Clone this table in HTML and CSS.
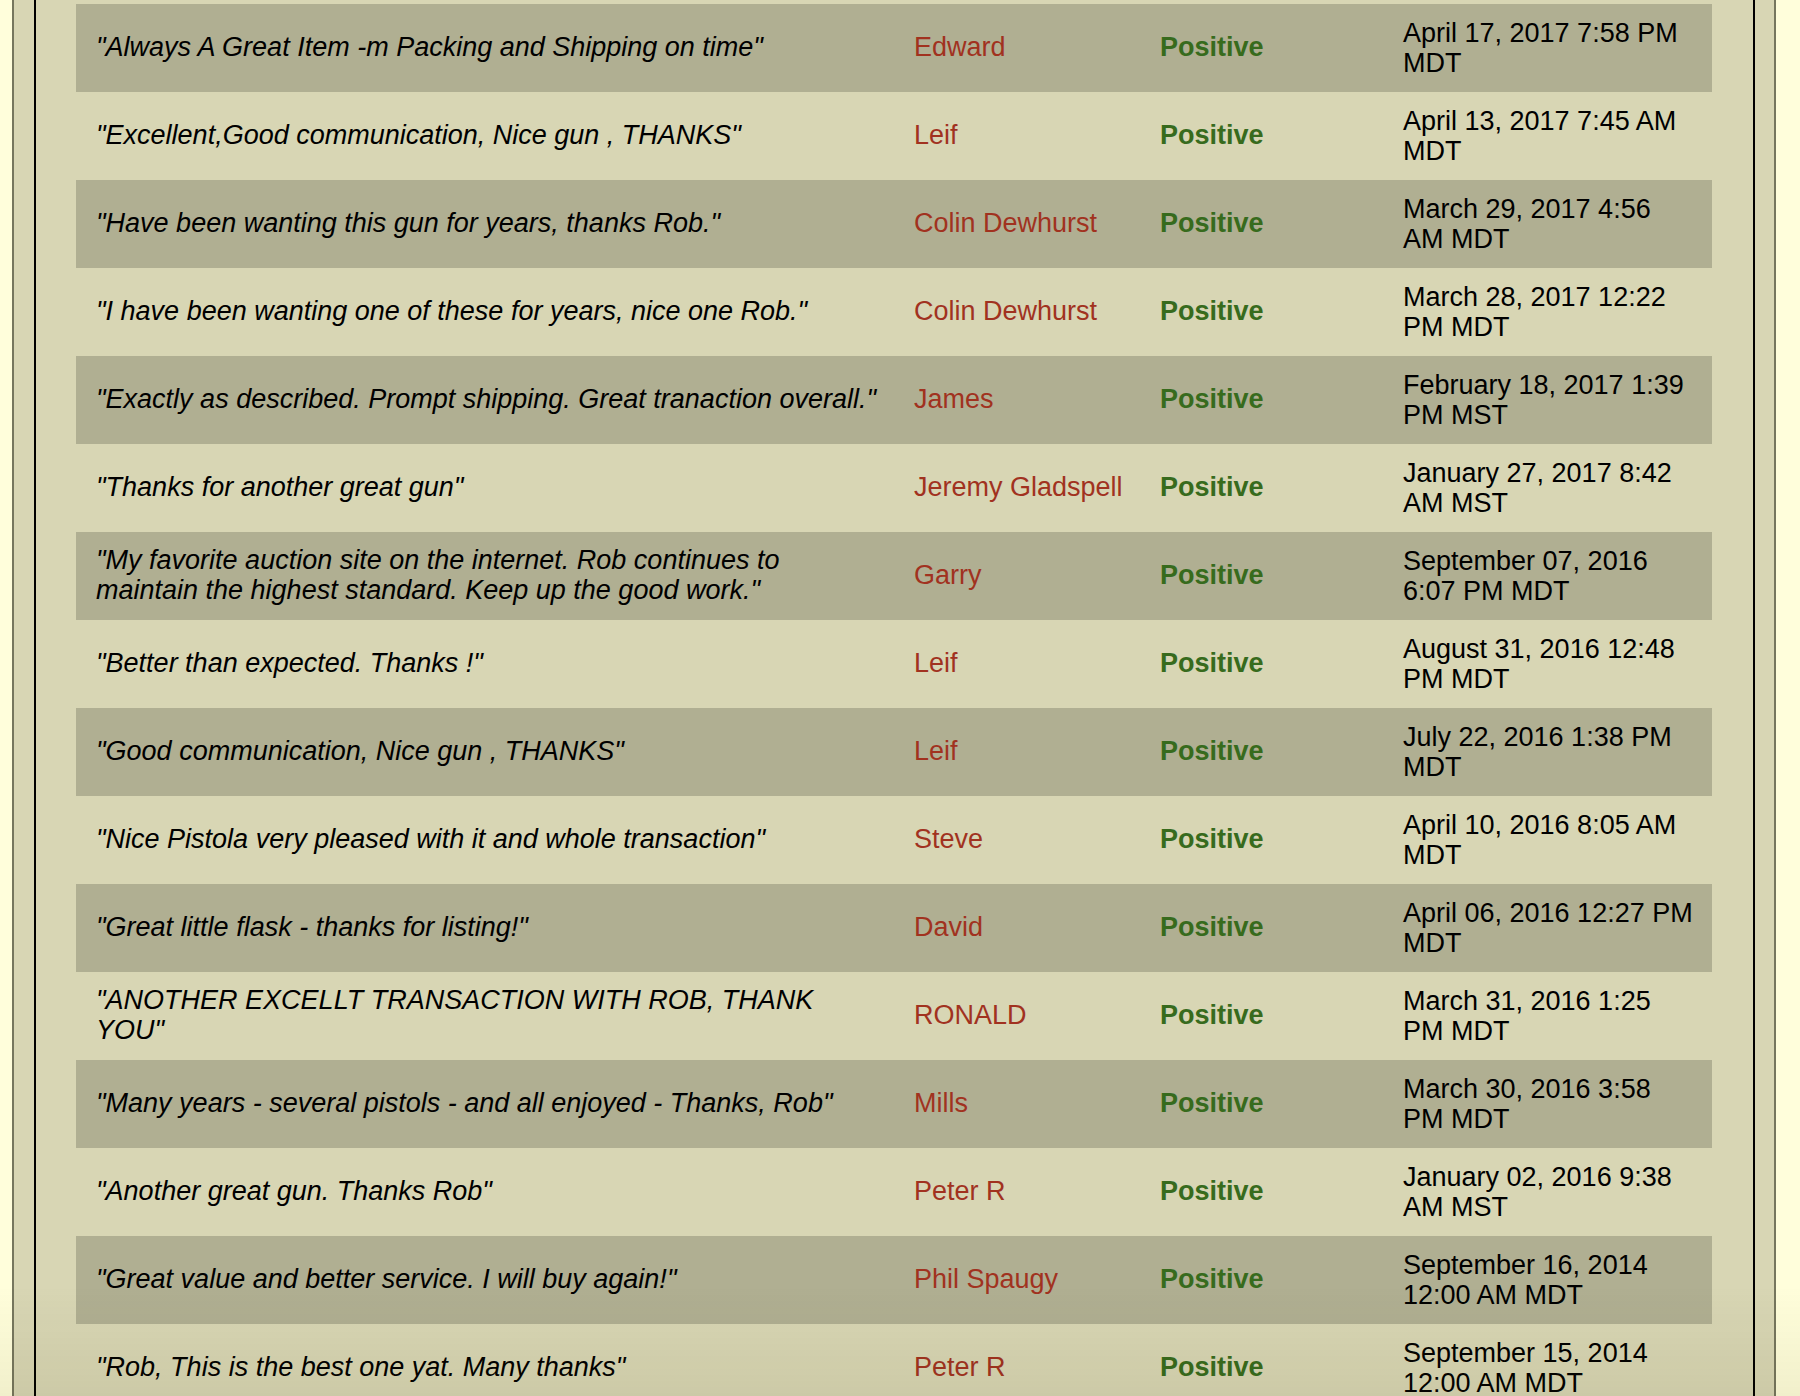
FILE: index.html
```html
<!DOCTYPE html>
<html>
<head>
<meta charset="utf-8">
<title>Feedback</title>
<link rel="stylesheet" href="styles.css">
</head>
<body>
<div class="page">
  <div class="frame">
    <div class="feedback">
      <div class="row dark"><div class="c-quote">"Always A Great Item -m Packing and Shipping on time"</div><div class="c-name">Edward</div><div class="c-rating">Positive</div><div class="c-date">April 17, 2017 7:58 PM MDT</div></div>
      <div class="row"><div class="c-quote">"Excellent,Good communication, Nice gun , THANKS"</div><div class="c-name">Leif</div><div class="c-rating">Positive</div><div class="c-date">April 13, 2017 7:45 AM MDT</div></div>
      <div class="row dark"><div class="c-quote">"Have been wanting this gun for years, thanks Rob."</div><div class="c-name">Colin Dewhurst</div><div class="c-rating">Positive</div><div class="c-date">March 29, 2017 4:56 AM MDT</div></div>
      <div class="row"><div class="c-quote">"I have been wanting one of these for years, nice one Rob."</div><div class="c-name">Colin Dewhurst</div><div class="c-rating">Positive</div><div class="c-date">March 28, 2017 12:22 PM MDT</div></div>
      <div class="row dark"><div class="c-quote">"Exactly as described. Prompt shipping. Great tranaction overall."</div><div class="c-name">James</div><div class="c-rating">Positive</div><div class="c-date">February 18, 2017 1:39 PM MST</div></div>
      <div class="row"><div class="c-quote">"Thanks for another great gun"</div><div class="c-name">Jeremy Gladspell</div><div class="c-rating">Positive</div><div class="c-date">January 27, 2017 8:42 AM MST</div></div>
      <div class="row dark"><div class="c-quote">"My favorite auction site on the internet. Rob continues to maintain the highest standard. Keep up the good work."</div><div class="c-name">Garry</div><div class="c-rating">Positive</div><div class="c-date">September 07, 2016 6:07 PM MDT</div></div>
      <div class="row"><div class="c-quote">"Better than expected. Thanks !"</div><div class="c-name">Leif</div><div class="c-rating">Positive</div><div class="c-date">August 31, 2016 12:48 PM MDT</div></div>
      <div class="row dark"><div class="c-quote">"Good communication, Nice gun , THANKS"</div><div class="c-name">Leif</div><div class="c-rating">Positive</div><div class="c-date">July 22, 2016 1:38 PM MDT</div></div>
      <div class="row"><div class="c-quote">"Nice Pistola very pleased with it and whole transaction"</div><div class="c-name">Steve</div><div class="c-rating">Positive</div><div class="c-date">April 10, 2016 8:05 AM MDT</div></div>
      <div class="row dark"><div class="c-quote">"Great little flask - thanks for listing!"</div><div class="c-name">David</div><div class="c-rating">Positive</div><div class="c-date">April 06, 2016 12:27 PM MDT</div></div>
      <div class="row"><div class="c-quote">"ANOTHER EXCELLT TRANSACTION WITH ROB, THANK YOU"</div><div class="c-name">RONALD</div><div class="c-rating">Positive</div><div class="c-date">March 31, 2016 1:25 PM MDT</div></div>
      <div class="row dark"><div class="c-quote">"Many years - several pistols - and all enjoyed - Thanks, Rob"</div><div class="c-name">Mills</div><div class="c-rating">Positive</div><div class="c-date">March 30, 2016 3:58 PM MDT</div></div>
      <div class="row"><div class="c-quote">"Another great gun. Thanks Rob"</div><div class="c-name">Peter R</div><div class="c-rating">Positive</div><div class="c-date">January 02, 2016 9:38 AM MST</div></div>
      <div class="row dark"><div class="c-quote">"Great value and better service. I will buy again!"</div><div class="c-name">Phil Spaugy</div><div class="c-rating">Positive</div><div class="c-date">September 16, 2014 12:00 AM MDT</div></div>
      <div class="row"><div class="c-quote">"Rob, This is the best one yat. Many thanks"</div><div class="c-name">Peter R</div><div class="c-rating">Positive</div><div class="c-date">September 15, 2014 12:00 AM MDT</div></div>
    </div>
  </div>
</div>
<div class="bottom-shade"></div>
</body>
</html>
```

FILE: styles.css
```css
html, body {
  margin: 0;
  padding: 0;
  height: 100%;
  overflow: hidden;
}

body {
  background: #fffedb;
  font-family: "Liberation Sans", Arial, sans-serif;
  font-size: 27px;
  line-height: 30px;
  color: #000;
}

.page {
  margin-left: 12px;
  width: 1764px;
  min-height: 100%;
  box-sizing: border-box;
  background: #d8d6b4;
  border-left: 2px solid #76765e;
  border-right: 2px solid #76765e;
  padding: 0 19px 0 20px;
}

.frame {
  min-height: 1396px;
  border-left: 2px solid #000;
  border-right: 2px solid #000;
  padding: 4px 41px 0 40px;
}

.feedback {
  display: flex;
  flex-direction: column;
}

.row {
  display: grid;
  grid-template-columns: 818px 246px 243px 329px;
  align-items: center;
  min-height: 88px;
}

.row.dark {
  background: #b0af92;
}

.row > div {
  padding-left: 20px;
  box-sizing: border-box;
}

.c-quote {
  font-style: italic;
  padding-right: 12px;
  padding-bottom: 2px;
}

.c-name {
  color: #a1321f;
  padding-bottom: 2px;
}

.c-rating {
  color: #376b1d;
  font-weight: bold;
  padding-bottom: 2px;
}

.c-date {
  padding: 14px 16px 14px 20px;
}

.bottom-shade {
  position: fixed;
  left: 0;
  right: 0;
  bottom: 0;
  height: 110px;
  pointer-events: none;
  background: linear-gradient(to bottom, rgba(60, 50, 0, 0), rgba(60, 50, 0, 0.07));
}
```
